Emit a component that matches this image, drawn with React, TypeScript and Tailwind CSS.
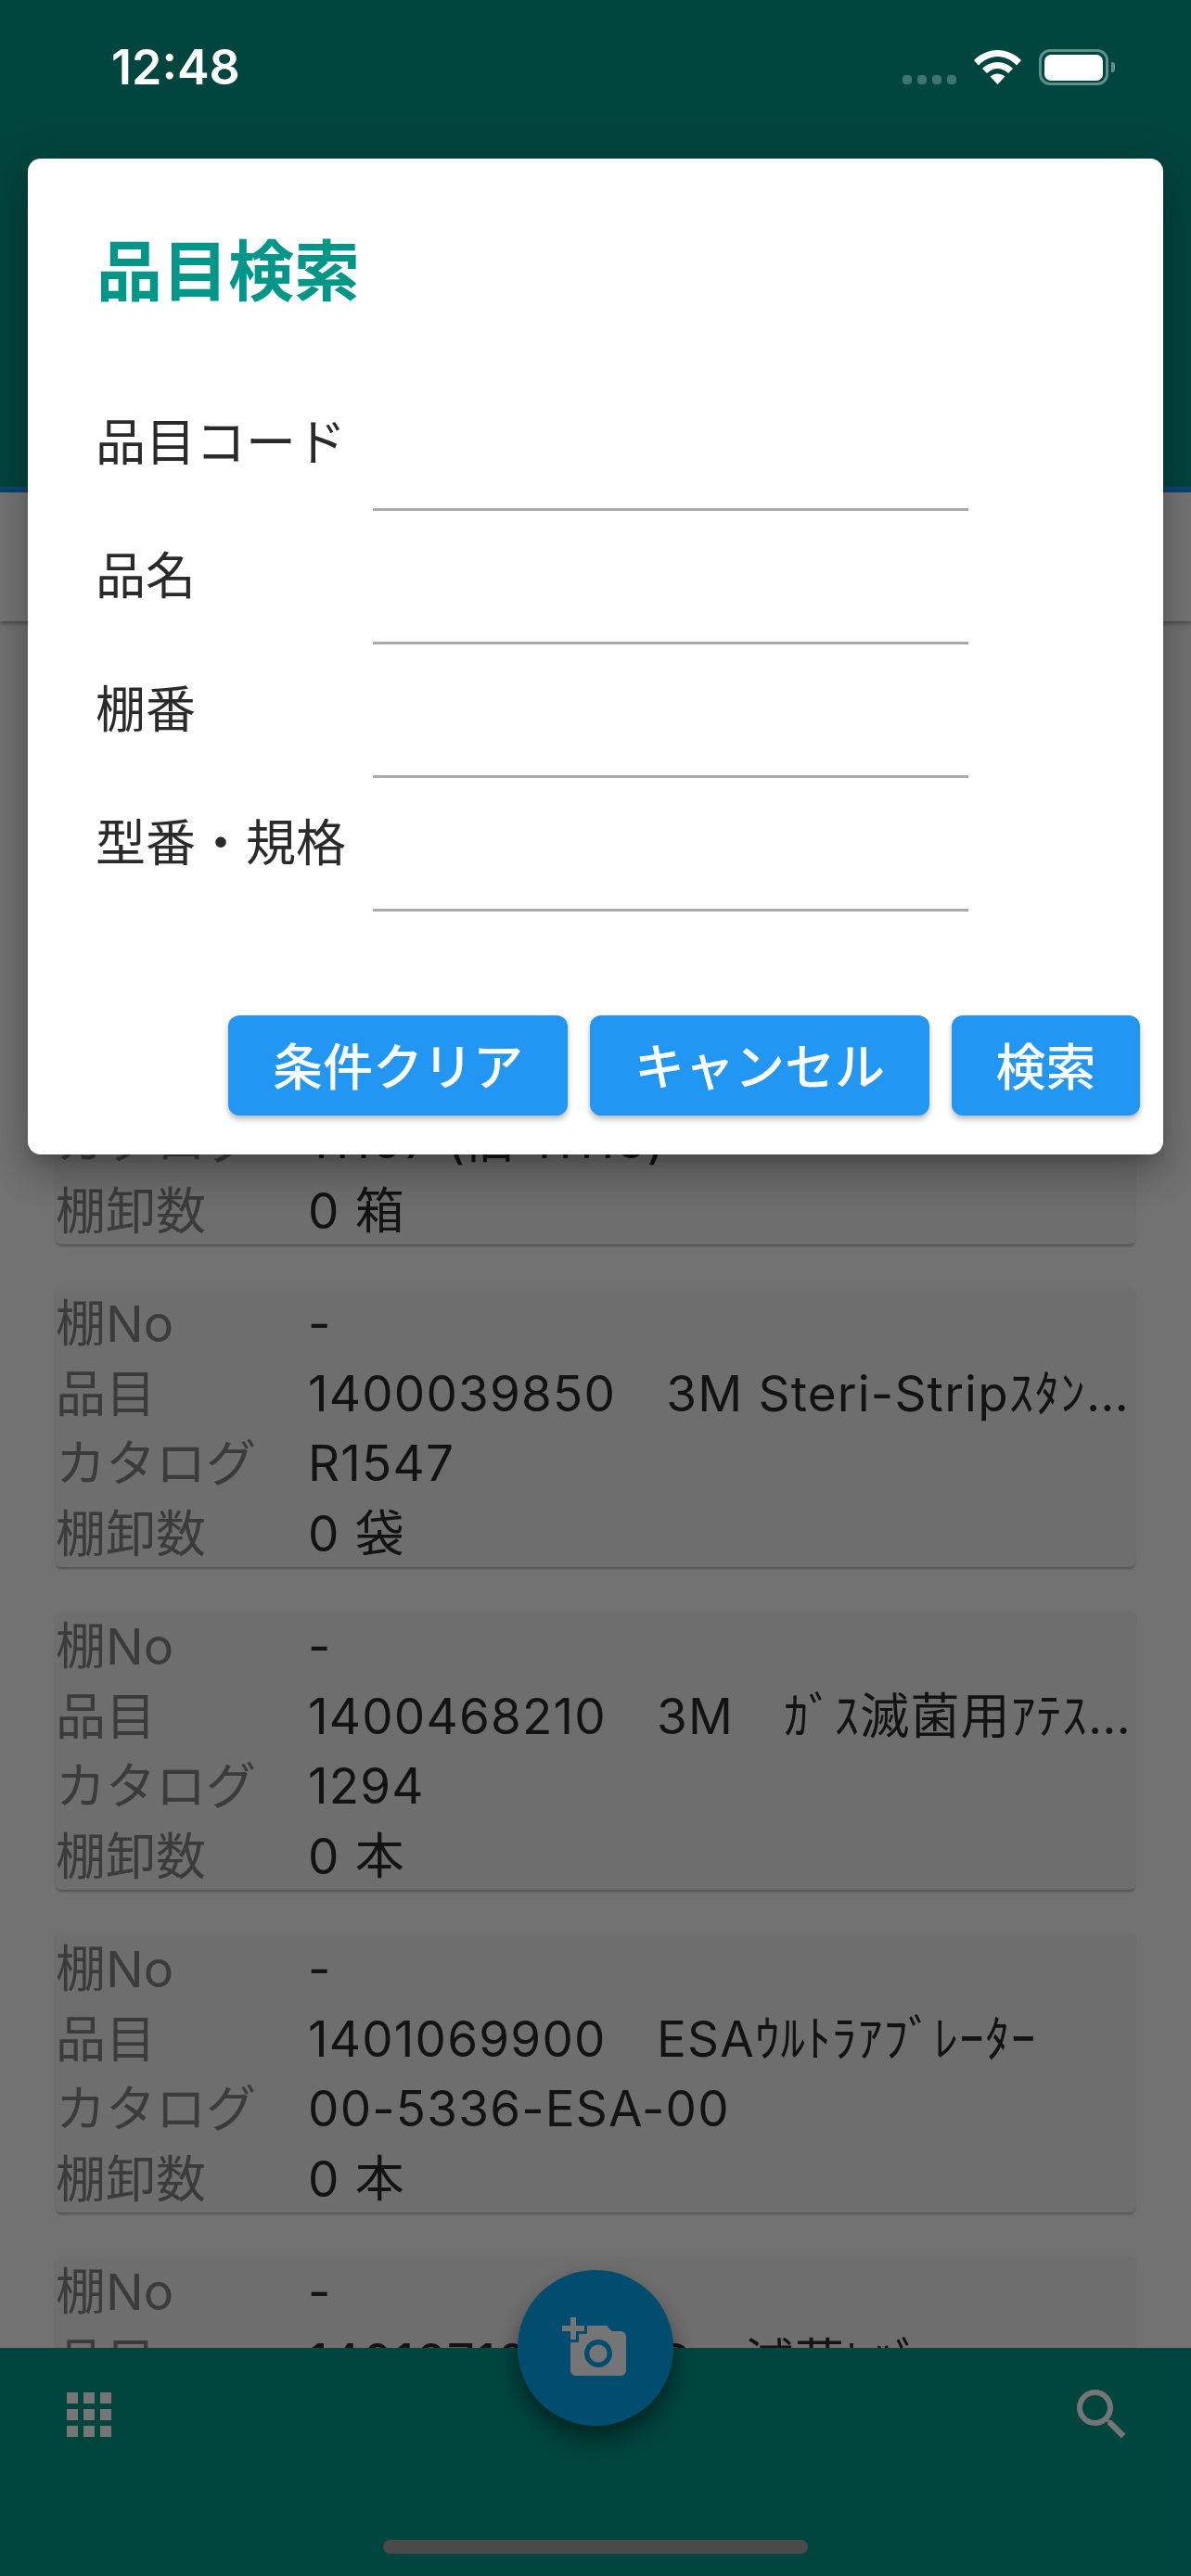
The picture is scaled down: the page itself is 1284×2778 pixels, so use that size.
import React from "react";
import { MdAddAPhoto, MdApps, MdSearch } from "react-icons/md";

const fontStack = "font-['Inter','Noto_Sans_CJK_JP',sans-serif]";

const items = [
  { tana: "-", hinmoku: "1400012340　3M ｽﾃﾘﾃｰﾌﾟ", catalog: "1222", count: "0 箱" },
  { tana: "-", hinmoku: "1400021120　3M ｽﾃﾘｹﾞｰｼﾞ", catalog: "11167 (旧 11116)", count: "0 箱" },
  { tana: "-", hinmoku: "1400039850　3M Steri-Stripｽﾀﾝﾀﾞｰﾄﾞ ｽｷﾝｸﾛｰｼﾞｬｰ", catalog: "R1547", count: "0 袋" },
  { tana: "-", hinmoku: "1400468210　3M　ｶﾞｽ滅菌用ｱﾃｽﾄ ﾊﾞｲｵﾛｼﾞｶﾙｲﾝｼﾞｹｰﾀｰ", catalog: "1294", count: "0 本" },
  { tana: "-", hinmoku: "1401069900　ESAｳﾙﾄﾗｱﾌﾞﾚｰﾀｰ", catalog: "00-5336-ESA-00", count: "0 本" },
  { tana: "-", hinmoku: "1401671000　ID　滅菌ﾚﾊﾞｰ", catalog: "-", count: "0 本" },
];

const fields = ["品目コード", "品名", "棚番", "型番・規格"];
const buttons = [
  { label: "条件クリア", width: "w-[366px]" },
  { label: "キャンセル", width: "w-[366px]" },
  { label: "検索", width: "w-[203px]" },
];

function Row({ label, value }: { label: string; value: string }) {
  return (
    <div className="flex h-[75.5px] items-center">
      <span className="w-[272px] shrink-0 text-[54px] text-[#808080]">{label}</span>
      <span className="min-w-0 flex-1 truncate tracking-[1.2px] text-[#2b2b2b]">{value}</span>
    </div>
  );
}

function StatusBar() {
  return (
    <div className="absolute left-0 top-0 z-20 flex h-[120px] w-full items-start justify-between pl-[120px] pr-[82px] pt-[40px]">
      <span className="text-[52px] font-semibold leading-[66px] text-white">12:48</span>
      <div className="flex items-start pt-[13px]">
        {/* 圏外のドット */}
        <div className="mr-[19px] mt-[28px] flex gap-[6px]">
          {[0, 1, 2, 3].map((i) => (
            <div key={i} className="h-[10px] w-[10px] rounded-[4px] bg-[#3f7570]" />
          ))}
        </div>
        <svg width="51" height="37" viewBox="0 0 51 37" fill="white" className="mt-[1px]">
          <path d="M0 11C7 4 16 0 25.5 0C35 0 44 4 51 11L46 16.5C40 10.5 33 7 25.5 7C18 7 11 10.5 5 16.5Z" />
          <path d="M9 20C13 16 19 13 25.5 13C32 13 38 16 42 20L37 25C34 22 30 20 25.5 20C21 20 17 22 14 25Z" />
          <path d="M17.5 28.5C20 26.5 23 25.5 25.5 25.5C28 25.5 31 26.5 33.5 28.5L25.5 37Z" />
        </svg>
        <div className="ml-[19px] flex h-[39px] w-[75px] items-center justify-center rounded-[12px] border-[3px] border-[#5f8f8a]">
          <div className="h-[28px] w-[63px] rounded-[7px] bg-white" />
        </div>
        <div className="ml-[3px] mt-[14px] h-[11px] w-[4px] rounded-r-[3px] bg-[#5f8f8a]" />
      </div>
    </div>
  );
}

function SearchDialog() {
  return (
    <div className="flex h-[1074px] w-full flex-col rounded-[14px] bg-white pt-[73px] shadow-[0_24px_38px_3px_rgba(0,0,0,0.14),0_9px_46px_8px_rgba(0,0,0,0.12),0_11px_15px_-7px_rgba(0,0,0,0.2)]">
      <h1 className="pl-[74px] text-[71px] font-semibold leading-[96px] text-[#009688]">品目検索</h1>

      <div className="mt-[67px] flex flex-col pl-[73px]">
        {fields.map((label) => (
          <div key={label} className="flex h-[144px]">
            <span className="w-[299px] shrink-0 self-center whitespace-nowrap pb-[2px] text-[54px] leading-[72px] text-[#2a2a2a]">
              {label}
            </span>
            <input
              type="text"
              aria-label={label}
              className="w-[642px] border-b-[3px] border-[#aaaaaa] bg-transparent text-[53px] outline-none"
            />
          </div>
        ))}
      </div>

      <div className="mt-[112px] flex justify-end gap-[24px] pr-[25px]">
        {buttons.map((b) => (
          <button
            key={b.label}
            className={`${b.width} flex h-[108px] items-center justify-center rounded-[12px] bg-[#2196f3] pt-[4px] text-[54px] font-medium text-white shadow-[0_4px_6px_rgba(0,0,0,0.28)]`}
          >
            {b.label}
          </button>
        ))}
      </div>
    </div>
  );
}

export default function App() {
  return (
    <div className={`relative flex h-[2778px] w-[1284px] flex-col overflow-hidden bg-[#f8f8f8] ${fontStack}`}>
      {/* ヘッダー */}
      <div className="h-[531px] shrink-0 border-b-[6px] border-[#2196f3] bg-[#009688]" />
      <div className="z-[1] h-[139px] shrink-0 bg-white shadow-[0_2px_5px_rgba(0,0,0,0.4)]" />

      {/* 棚卸リスト */}
      <div className="flex min-h-0 flex-1 flex-col gap-[47px] overflow-hidden pl-[60px] pr-[60px] pt-[23px] text-[53px] leading-[75px]">
        {items.map((item) => (
          <div
            key={item.hinmoku}
            className="h-[301px] shrink-0 rounded-[6px] bg-[#efefef] pt-[1px] shadow-[0_3px_3px_-1px_rgba(0,0,0,0.28),0_0_3px_rgba(0,0,0,0.06)]"
          >
            <Row label="棚No" value={item.tana} />
            <Row label="品目" value={item.hinmoku} />
            <Row label="カタログ" value={item.catalog} />
            <Row label="棚卸数" value={item.count} />
          </div>
        ))}
      </div>

      {/* ボトムバー */}
      <div className="flex h-[246px] shrink-0 items-start justify-between bg-[#009688] px-[60px] pt-[36px] text-white">
        <MdApps size={72} />
        <MdSearch size={72} />
      </div>

      <button className="absolute left-[558px] top-[2448px] flex h-[168px] w-[168px] items-center justify-center rounded-full bg-[#03a9f4] text-white shadow-[0_14px_24px_rgba(0,0,0,0.45)]">
        <MdAddAPhoto size={72} />
      </button>

      {/* モーダルの背景 */}
      <div className="absolute inset-0 z-10 bg-black/54 pl-[30px] pr-[30px] pt-[171px]">
        <SearchDialog />
      </div>

      <StatusBar />
      <div className="absolute left-[413px] top-[2739px] z-20 h-[15px] w-[458px] rounded-full bg-[#4a4a4a]" />
    </div>
  );
}
